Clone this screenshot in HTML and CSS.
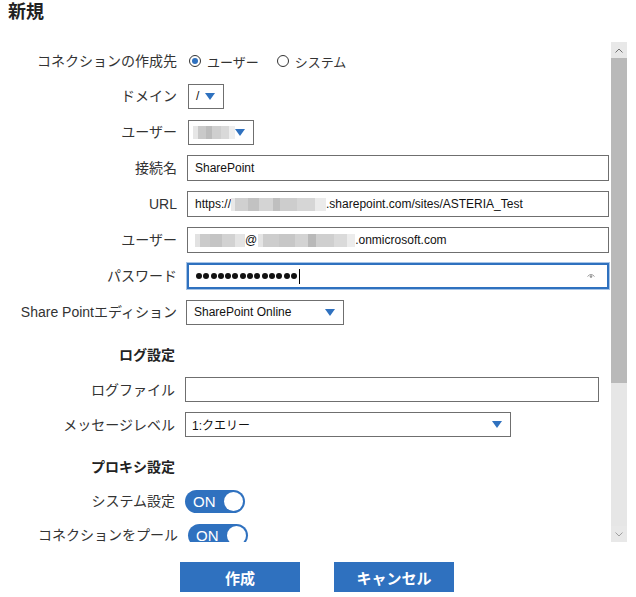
FILE: index.html
```html
<!DOCTYPE html>
<html lang="ja">
<head>
    <meta charset="UTF-8">
    <meta name="viewport" content="width=device-width, initial-scale=1.0">
    <title>新規コネクション</title>
    <link rel="stylesheet" href="styles.css">
</head>
<body>
    <div class="dialog">
        <h1 class="title">新規</h1>
        <div class="pane">
            <div class="form">
                <div class="section">
                    <div class="row row--first">
                        <span class="label">コネクションの作成先</span>
                        <div class="radios">
                            <span class="radio radio--on"></span>
                            <span class="radio-text">ユーザー</span>
                            <span class="radio"></span>
                            <span class="radio-text">システム</span>
                        </div>
                    </div>
                    <div class="row">
                        <span class="label">ドメイン</span>
                        <div class="select select--domain">
                            <span>/</span>
                            <svg class="caret" width="10" height="7" viewBox="0 0 10 7"><polygon points="0,0 10,0 5,7"/></svg>
                        </div>
                    </div>
                    <div class="row">
                        <span class="label">ユーザー</span>
                        <div class="select select--user">
                            <span class="blur blur--short"></span>
                            <svg class="caret" width="10" height="7" viewBox="0 0 10 7"><polygon points="0,0 10,0 5,7"/></svg>
                        </div>
                    </div>
                    <div class="row">
                        <span class="label">接続名</span>
                        <div class="input">SharePoint</div>
                    </div>
                    <div class="row">
                        <span class="label">URL</span>
                        <div class="input">https://<span class="blur blur--host"></span>.sharepoint.com/sites/ASTERIA_Test</div>
                    </div>
                    <div class="row">
                        <span class="label">ユーザー</span>
                        <div class="input"><span class="blur blur--name"></span>@<span class="blur blur--tenant"></span>.onmicrosoft.com</div>
                    </div>
                    <div class="row">
                        <span class="label">パスワード</span>
                        <div class="input input--focus">
                            <span class="dots">
                                <span class="dot"></span><span class="dot"></span><span class="dot"></span><span class="dot"></span>
                                <span class="dot"></span><span class="dot"></span><span class="dot"></span><span class="dot"></span>
                                <span class="dot"></span><span class="dot"></span><span class="dot"></span><span class="dot"></span>
                                <span class="dot"></span><span class="dot"></span>
                            </span>
                            <span class="cursor"></span>
                            <svg class="eye" width="8" height="6" viewBox="0 0 8 6"><path d="M0.5 3.5 Q4 -0.5 7.5 3.5" fill="none" stroke="#9a9a9a" stroke-width="1"/><circle cx="4" cy="3.6" r="1.3" fill="#9a9a9a"/></svg>
                        </div>
                    </div>
                    <div class="row">
                        <span class="label">Share Pointエディション</span>
                        <div class="select select--edition">
                            <span>SharePoint Online</span>
                            <svg class="caret" width="10" height="7" viewBox="0 0 10 7"><polygon points="0,0 10,0 5,7"/></svg>
                        </div>
                    </div>
                </div>

                <div class="section section--sub">
                    <div class="row row--head">
                        <span class="label">ログ設定</span>
                    </div>
                    <div class="row">
                        <span class="label">ログファイル</span>
                        <div class="input input--log"></div>
                    </div>
                    <div class="row">
                        <span class="label">メッセージレベル</span>
                        <div class="select select--level">
                            <span>1:クエリー</span>
                            <svg class="caret" width="10" height="7" viewBox="0 0 10 7"><polygon points="0,0 10,0 5,7"/></svg>
                        </div>
                    </div>
                </div>

                <div class="section section--sub section--proxy">
                    <div class="row row--head">
                        <span class="label">プロキシ設定</span>
                    </div>
                    <div class="row">
                        <span class="label">システム設定</span>
                        <div class="toggle"><span class="toggle-text">ON</span><span class="knob"></span></div>
                    </div>
                    <div class="row">
                        <span class="label label--wide">コネクションをプール</span>
                        <div class="toggle"><span class="toggle-text">ON</span><span class="knob"></span></div>
                    </div>
                </div>
            </div>

            <div class="scrollbar">
                <div class="sb-btn">
                    <svg width="8" height="5" viewBox="0 0 8 5"><polyline points="0.5,4.5 4,1 7.5,4.5" fill="none" stroke="#707070" stroke-width="1"/></svg>
                </div>
                <div class="sb-track"><div class="sb-thumb"></div></div>
                <div class="sb-btn">
                    <svg width="8" height="5" viewBox="0 0 8 5"><polyline points="0.5,0.5 4,4 7.5,0.5" fill="none" stroke="#a0a0a0" stroke-width="1"/></svg>
                </div>
            </div>
        </div>

        <div class="actions">
            <button class="btn">作成</button>
            <button class="btn">キャンセル</button>
        </div>
    </div>
</body>
</html>
```

FILE: styles.css
```css
body {
    margin: 0;
    font-family: "Liberation Sans", "Noto Sans CJK JP", sans-serif;
    color: #333;
    background: #fff;
}
.dialog {
    padding: 0 9px 0 8px;
}
.title {
    margin: 0;
    height: 42px;
    font-size: 18px;
    line-height: 24px;
    font-weight: bold;
    color: #222;
}
.pane {
    display: flex;
    height: 500px;
}
.form {
    flex: 1;
    overflow: hidden;
    padding-top: 2px;
}
.row {
    display: flex;
    align-items: center;
    gap: 10px;
    height: 36px;
}
.row--first {
    height: 34px;
}
.section--sub .row {
    height: 35px;
}
.section--proxy .row {
    height: 34px;
}
.section--sub .row--head {
    height: 34px;
    margin-top: 8px;
    font-weight: bold;
    color: #222;
}
.label {
    flex: none;
    width: 169px;
    text-align: right;
    font-size: 14px;
    line-height: 16px;
    white-space: nowrap;
}
.section--sub .label {
    width: 167px;
}
.section--sub .label--wide {
    width: 170px;
}

/* radios */
.radios {
    display: flex;
    align-items: center;
    font-size: 13px;
}
.radio {
    width: 10px;
    height: 10px;
    margin-left: 2px;
    border: 1.5px solid #333;
    border-radius: 50%;
    display: flex;
    align-items: center;
    justify-content: center;
}
.radio--on::after {
    content: "";
    width: 6px;
    height: 6px;
    border-radius: 50%;
    background: #2f71bf;
}
.radio-text {
    margin-left: 6px;
    margin-right: 16px;
}

/* selects and inputs */
.select, .input {
    box-sizing: border-box;
    border: 1px solid #6f6f6f;
    background: #fff;
    font-size: 12px;
    color: #111;
    display: flex;
    align-items: center;
}
.select {
    height: 25px;
    padding: 0 8px 0 7px;
}
.caret {
    margin-left: auto;
    fill: #2f71bf;
    flex: none;
}
.select--domain {
    width: 36px;
    margin-left: 1px;
}
.select--user {
    width: 66px;
    margin-left: 1px;
    padding-left: 4px;
}
.select--edition {
    width: 158px;
    margin-left: -1px;
}
.select--level {
    width: 326px;
    padding-left: 6px;
}
.input {
    width: 422px;
    height: 26px;
    padding: 0 7px;
    white-space: nowrap;
}
.input--log {
    width: 414px;
    height: 25px;
}
.input--focus {
    border: 2px solid #2f71bf;
    box-shadow: 0 0 0 1px #a7c4e6;
    padding-left: 7px;
    padding-right: 12px;
}
.dots {
    display: flex;
    gap: 1.3px;
}
.dot {
    width: 6px;
    height: 6px;
    border-radius: 50%;
    background: #111;
}
.cursor {
    width: 1px;
    height: 15px;
    margin-left: 2px;
    background: #000;
}
.eye {
    margin-left: auto;
}

/* blurred values */
.blur {
    display: inline-block;
    height: 13px;
    vertical-align: middle;
}
.blur--short {
    width: 43px;
    background: linear-gradient(90deg, #e6e6e6 0 12%, #c9c9c9 12% 30%, #bcbcbc 30% 46%, #cfcfcf 46% 66%, #d9d9d9 66% 86%, #eeeeee 86%);
}
.blur--host {
    width: 95px;
    background: linear-gradient(90deg, #e8e8e8 0 4%, #d0d0d0 4% 18%, #c2c2c2 18% 30%, #d4d4d4 30% 44%, #bfbfbf 44% 52%, #cdcdcd 52% 70%, #d6d6d6 70% 88%, #ebebeb 88%);
}
.blur--name {
    width: 50px;
    background: linear-gradient(90deg, #e2e2e2 0 10%, #cbcbcb 10% 30%, #c4c4c4 30% 55%, #d2d2d2 55% 80%, #e4e4e4 80%);
}
.blur--tenant {
    width: 97px;
    margin-left: 1px;
    background: linear-gradient(90deg, #e4e4e4 0 5%, #cdcdcd 5% 22%, #c7c7c7 22% 38%, #d3d3d3 38% 52%, #b9b9b9 52% 60%, #cfcfcf 60% 78%, #dadada 78% 92%, #ececec 92%);
}

/* toggles */
.toggle {
    box-sizing: border-box;
    width: 60px;
    height: 23px;
    border-radius: 12px;
    background: #2f71bf;
    display: flex;
    align-items: center;
    padding: 0 2px 0 8px;
}
.toggle-text {
    color: #fff;
    font-size: 15px;
}
.knob {
    margin-left: auto;
    width: 19px;
    height: 19px;
    border-radius: 50%;
    background: #fff;
}

/* scrollbar */
.scrollbar {
    width: 16px;
    display: flex;
    flex-direction: column;
    background: #e6e6e6;
}
.sb-btn {
    height: 16px;
    display: flex;
    align-items: center;
    justify-content: center;
    background: #e8e8e8;
}
.sb-track {
    flex: 1;
}
.sb-thumb {
    height: 325px;
    background: #b9b9b9;
}

/* buttons */
.actions {
    display: flex;
    justify-content: center;
    gap: 34px;
    padding: 20px 1px 0 0;
}
.btn {
    width: 120px;
    height: 30px;
    border: none;
    background: #2f71bf;
    color: #fff;
    font-family: "Liberation Sans", "Noto Sans CJK JP", sans-serif;
    font-size: 15px;
    font-weight: bold;
    cursor: pointer;
}
```
